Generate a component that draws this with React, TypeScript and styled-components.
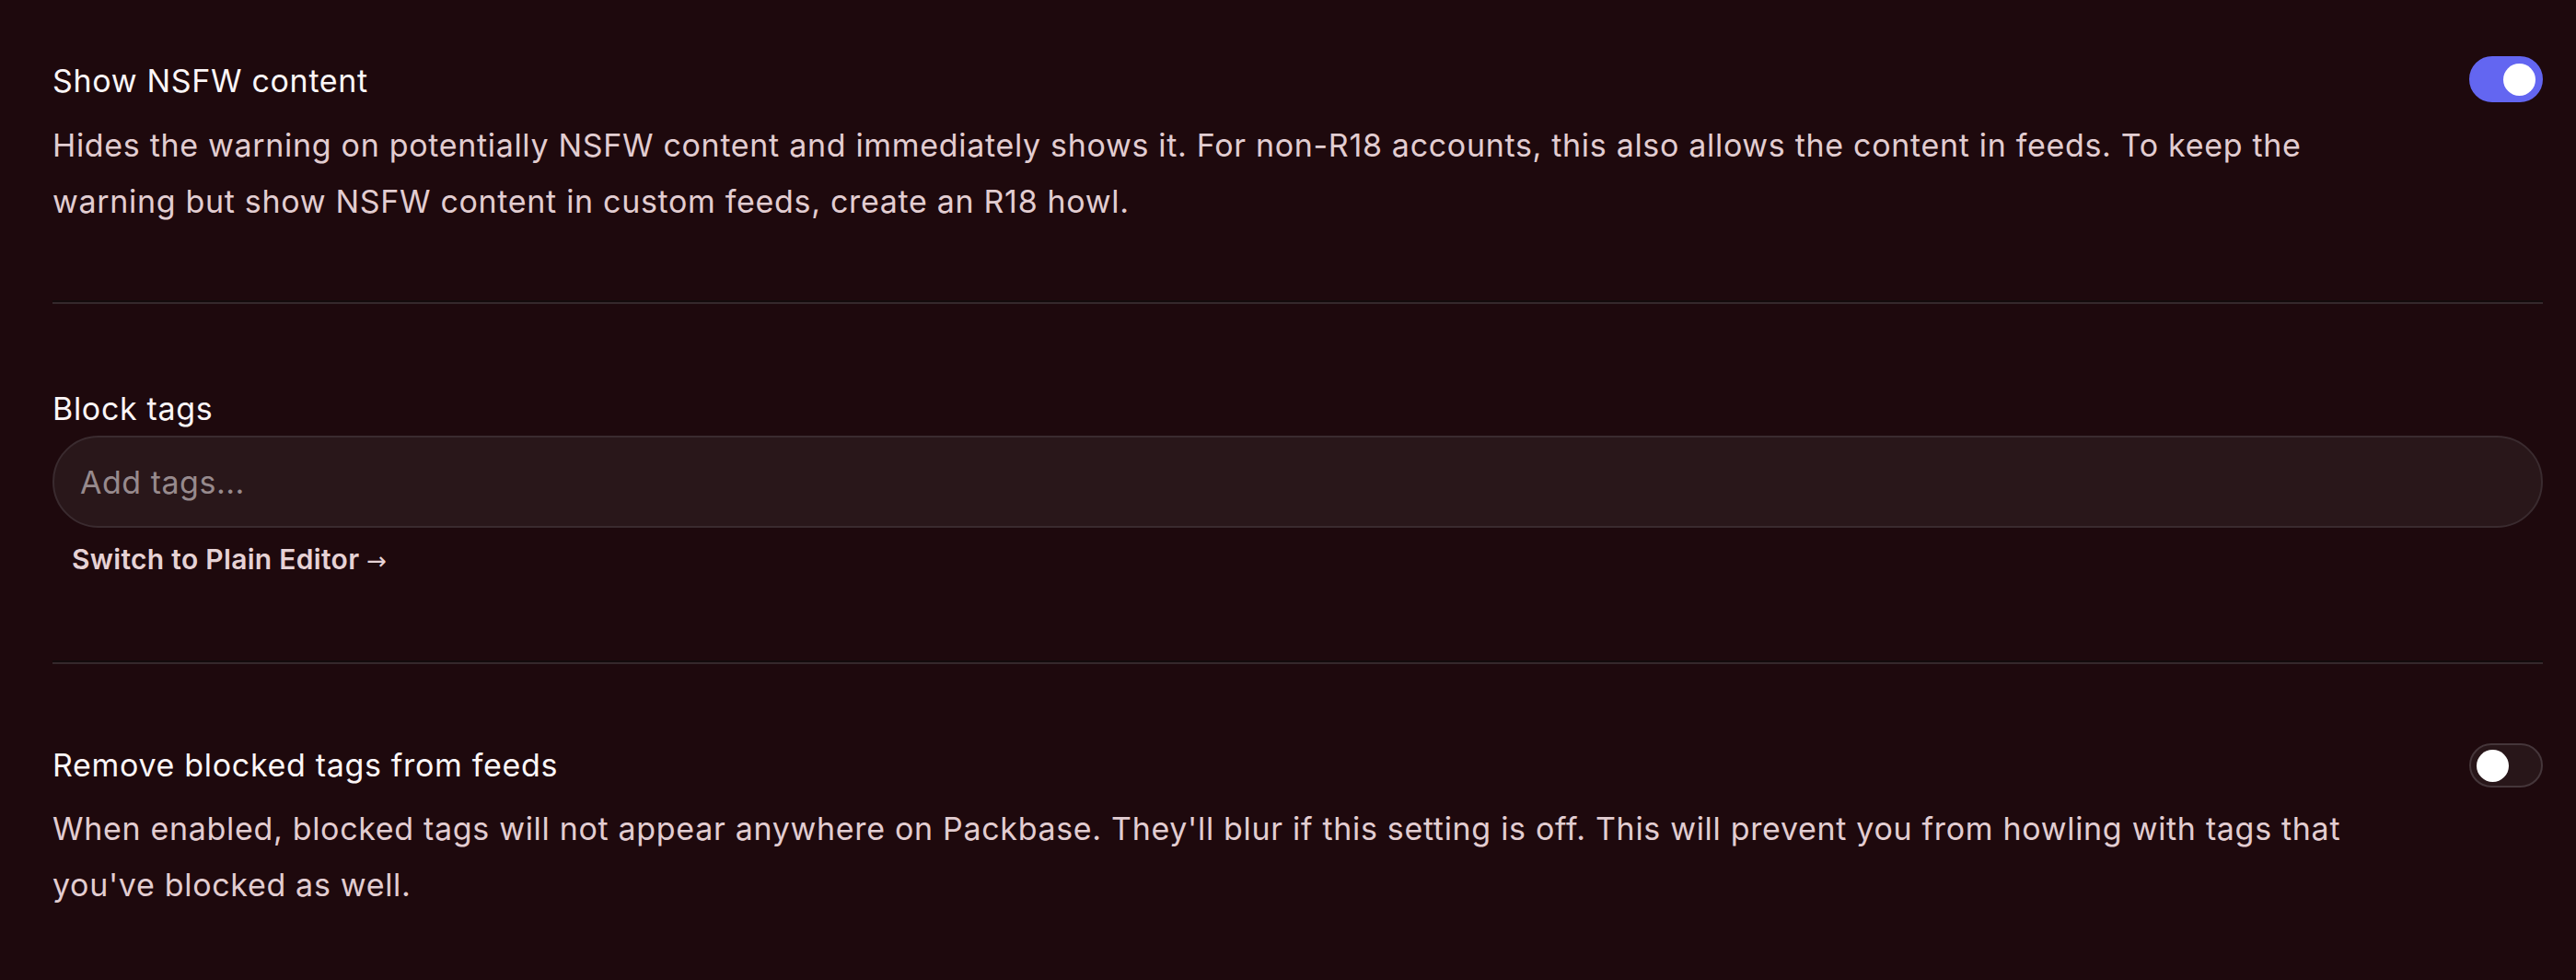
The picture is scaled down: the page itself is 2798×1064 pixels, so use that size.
import React, { useState } from "react";
import styled, { createGlobalStyle } from "styled-components";

const GlobalStyle = createGlobalStyle`
  html, body {
    margin: 0;
    padding: 0;
    background: #1e090d;
  }
  body {
    font-family: Inter, "Open Sans", "Liberation Sans", sans-serif;
    -webkit-font-smoothing: antialiased;
  }
`;

const Page = styled.div`
  min-height: 1064px;
  box-sizing: border-box;
  padding: 66px 36px 60px 57px;
  background: #1e090d;
  display: flex;
  flex-direction: column;
`;

const SettingRow = styled.div<{ $top?: number }>`
  display: flex;
  align-items: flex-start;
  justify-content: space-between;
  margin-top: ${(p) => p.$top ?? 0}px;
`;

const TextColumn = styled.div`
  display: flex;
  flex-direction: column;
  max-width: 2540px;
`;

const Title = styled.div`
  font-size: 34px;
  line-height: 44px;
  color: #fbf6f7;
  letter-spacing: 0.02em;
`;

const Description = styled.p<{ $gap?: number }>`
  margin: ${(p) => p.$gap ?? 17}px 0 0;
  font-size: 34px;
  line-height: 61px;
  color: #e2cdd1;
  letter-spacing: 0.02em;
`;

const Divider = styled.hr<{ $top: number }>`
  margin: ${(p) => p.$top}px 0 0;
  height: 0;
  border: 0;
  border-top: 2px solid #130b0c;
  border-bottom: 2px solid #35282b;
`;

const Switch = styled.button<{ $on: boolean }>`
  flex: none;
  width: 80px;
  height: ${(p) => (p.$on ? 50 : 48)}px;
  margin-top: ${(p) => (p.$on ? -5 : -2)}px;
  padding: 0 6px;
  box-sizing: border-box;
  border-radius: 999px;
  border: 2px solid ${(p) => (p.$on ? "#6366f1" : "#45363a")};
  background: ${(p) => (p.$on ? "#6366f1" : "#281619")};
  display: flex;
  align-items: center;
  justify-content: ${(p) => (p.$on ? "flex-end" : "flex-start")};
  cursor: pointer;
`;

const Knob = styled.span`
  width: 35px;
  height: 35px;
  border-radius: 50%;
  background: #ffffff;
`;

const TagSection = styled.div`
  display: flex;
  flex-direction: column;
  margin-top: 92px;
`;

const Label = styled.div`
  font-size: 34px;
  line-height: 44px;
  color: #fbf6f7;
  letter-spacing: 0.02em;
`;

const TagInput = styled.input`
  margin-top: 7px;
  height: 100px;
  box-sizing: border-box;
  border-radius: 999px;
  border: 2px solid #3a2b2f;
  background: #29171a;
  padding: 0 28px;
  font-family: inherit;
  font-size: 34px;
  letter-spacing: 0.015em;
  color: #f3e6e8;
  outline: none;

  &::placeholder {
    color: #978a8d;
  }
`;

const EditorLink = styled.button`
  align-self: flex-start;
  margin: 14px 0 0 21px;
  padding: 0;
  border: 0;
  background: none;
  font-family: inherit;
  font-size: 30px;
  font-weight: 600;
  line-height: 40px;
  letter-spacing: 0.01em;
  color: #e6d2d5;
  cursor: pointer;
`;

const Arrow = styled.span`
  font-family: "DejaVu Sans", sans-serif;
  font-weight: 400;
  font-size: 26px;
`;

export default function App() {
  const [nsfw, setNsfw] = useState(true);
  const [removeBlocked, setRemoveBlocked] = useState(false);

  return (
    <>
      <GlobalStyle />
      <Page>
        <SettingRow>
          <TextColumn>
            <Title>Show NSFW content</Title>
            <Description>
              Hides the warning on potentially NSFW content and immediately shows it. For non-R18
              accounts, this also allows the content in feeds. To keep the warning but show NSFW
              content in custom feeds, create an R18 howl.
            </Description>
          </TextColumn>
          <Switch $on={nsfw} onClick={() => setNsfw(!nsfw)} aria-pressed={nsfw}>
            <Knob />
          </Switch>
        </SettingRow>

        <Divider $top={77} />

        <TagSection>
          <Label>Block tags</Label>
          <TagInput placeholder="Add tags..." />
          <EditorLink>
            Switch to Plain Editor <Arrow>→</Arrow>
          </EditorLink>
        </TagSection>

        <Divider $top={88} />

        <SettingRow $top={88}>
          <TextColumn>
            <Title>Remove blocked tags from feeds</Title>
            <Description $gap={16}>
              When enabled, blocked tags will not appear anywhere on Packbase. They'll blur if this
              setting is off. This will prevent you from howling with tags that you've blocked as
              well.
            </Description>
          </TextColumn>
          <Switch
            $on={removeBlocked}
            onClick={() => setRemoveBlocked(!removeBlocked)}
            aria-pressed={removeBlocked}
          >
            <Knob />
          </Switch>
        </SettingRow>
      </Page>
    </>
  );
}
